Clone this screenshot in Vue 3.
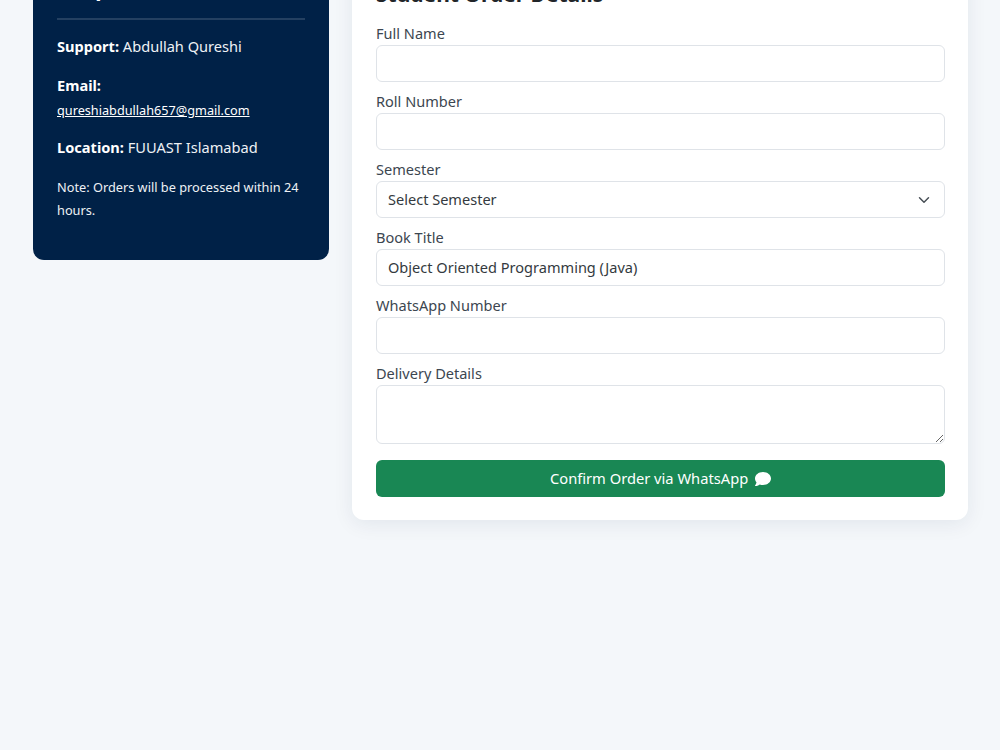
<template>
  <div class="page">
    <div class="layout">
      <aside class="help-card">
        <h4 class="help-title">Shop Info</h4>
        <p class="line"><strong>Support:</strong> Abdullah Qureshi</p>
        <p class="line email-line">
          <strong>Email:</strong><br />
          <a href="#" class="email">qureshiabdullah657@gmail.com</a>
        </p>
        <p class="line location-line"><strong>Location:</strong> FUUAST Islamabad</p>
        <p class="note">Note: Orders will be processed within 24 hours.</p>
      </aside>

      <main class="order-card">
        <h4 class="order-title">Student Order Details</h4>
        <form @submit.prevent>
          <div class="field">
            <label>Full Name</label>
            <input type="text" class="control" v-model="form.name" />
          </div>
          <div class="field">
            <label>Roll Number</label>
            <input type="text" class="control" v-model="form.roll" />
          </div>
          <div class="field">
            <label>Semester</label>
            <select class="control select" v-model="form.semester">
              <option value="">Select Semester</option>
              <option v-for="n in 8" :key="n" :value="n">Semester {{ n }}</option>
            </select>
          </div>
          <div class="field">
            <label>Book Title</label>
            <input type="text" class="control" v-model="form.book" />
          </div>
          <div class="field">
            <label>WhatsApp Number</label>
            <input type="text" class="control" v-model="form.whatsapp" />
          </div>
          <div class="field last">
            <label>Delivery Details</label>
            <textarea class="control area" rows="2" v-model="form.delivery"></textarea>
          </div>
          <button type="submit" class="confirm-btn">
            Confirm Order via WhatsApp
            <svg class="chat-icon" viewBox="0 0 512 512" aria-hidden="true">
              <path
                d="M512 240c0 114.9-114.6 208-256 208c-37.1 0-72.3-6.4-104.1-17.9c-11.9 8.7-31.3 20.6-54.3 30.6C73.6 471.1 44.7 480 16 480c-6.5 0-12.3-3.9-14.8-9.9c-2.5-6-1.1-12.8 3.4-17.4c.3-.3 .7-.7 1.3-1.4c1.1-1.2 2.8-3.1 4.9-5.7c4.1-5 9.6-12.4 15.2-21.6c10-16.6 19.5-38.4 21.4-62.9C17.7 326.8 0 285.1 0 240C0 125.1 114.6 32 256 32s256 93.1 256 208z"
              />
            </svg>
          </button>
        </form>
      </main>
    </div>
  </div>
</template>

<script setup>
import { reactive } from 'vue'

const form = reactive({
  name: '',
  roll: '',
  semester: '',
  book: 'Object Oriented Programming (Java)',
  whatsapp: '',
  delivery: '',
})
</script>

<style scoped>
.page {
  height: 750px;
  overflow: hidden;
  background: #f4f7fa;
  font-family: 'Noto Sans', 'Open Sans', sans-serif;
  font-size: 14.55px;
  line-height: 24px;
  color: #212529;
}

.layout {
  display: grid;
  grid-template-columns: 296px 616px;
  gap: 23px;
  align-items: start;
  margin-top: -45px;
  padding-left: 33px;
}

.help-card {
  background: #002147;
  color: #eef1f5;
  border-radius: 11px;
  padding: 24px;
  height: 305px;
  box-sizing: border-box;
  font-size: 14.6px;
}

.help-title {
  margin: -5px 0 14px;
  padding-bottom: 16px;
  border-bottom: 2px solid rgba(255, 255, 255, 0.14);
  font-size: 21px;
  line-height: 28px;
  font-weight: 700;
  color: #fff;
}

.line {
  margin: 0 0 15px;
}

.line strong {
  color: #fff;
}

.email-line {
  margin-bottom: 13px;
}

.location-line {
  margin-bottom: 16.5px;
}

.email {
  color: #fff;
  font-size: 12.7px;
}

.note {
  margin: 0;
  font-size: 12.75px;
  line-height: 23px;
}

.order-card {
  background: #fff;
  border-radius: 12px;
  padding: 24px 23px 23px 24px;
  box-shadow: 0 4px 20px rgba(0, 33, 71, 0.08);
}

.order-title {
  margin: 1px 0 13px;
  font-size: 21px;
  line-height: 28px;
  font-weight: 700;
}

.field {
  margin-bottom: 7px;
}

.field.last {
  margin-bottom: 16px;
}

.field label {
  display: block;
  padding: 1px 0;
  line-height: 22px;
  color: #3c4650;
}

.control {
  display: block;
  width: 100%;
  height: 37px;
  box-sizing: border-box;
  padding: 5px 11px 7px;
  border: 1px solid #dfe3e8;
  border-radius: 6px;
  background: #fff;
  color: #343a40;
  font: inherit;
  outline: none;
}

.select {
  appearance: none;
  background-image: url("data:image/svg+xml,%3csvg xmlns='http://www.w3.org/2000/svg' viewBox='0 0 16 16'%3e%3cpath fill='none' stroke='%23495057' stroke-linecap='round' stroke-linejoin='round' stroke-width='2' d='m2 5 6 6 6-6'/%3e%3c/svg%3e");
  background-repeat: no-repeat;
  background-position: right 12px center;
  background-size: 16px 12px;
}

.area {
  height: 59px;
  resize: vertical;
}

.confirm-btn {
  display: block;
  width: 100%;
  height: 37px;
  padding: 0 0 2px;
  border: none;
  border-radius: 6px;
  background: #198754;
  color: #fff;
  font: inherit;
  font-size: 14.7px;
  text-align: center;
  cursor: pointer;
}

.chat-icon {
  width: 16px;
  height: 16px;
  margin-left: 3px;
  vertical-align: -3px;
  fill: #fff;
}
</style>

<style>
body {
  background: #f4f7fa;
}
</style>
